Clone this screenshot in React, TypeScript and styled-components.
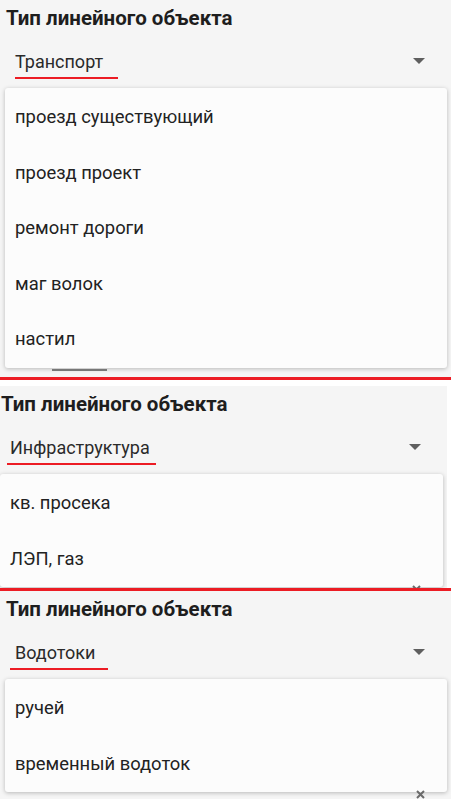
import React from "react";
import styled, { createGlobalStyle } from "styled-components";

const GlobalStyle = createGlobalStyle`
	html, body {
		margin: 0;
		padding: 0;
		background: #ffffff;
	}
	body {
		font-family: Roboto, "Noto Sans", "Liberation Sans", sans-serif;
		color: #212121;
	}
`;

interface PanelData {
	value: string;
	items: string[];
	height: number;
	width: number;
	left: number;
	lineOffset: number;
	lineWidth: number;
	peek: "bar" | "cross";
}

const panels: PanelData[] = [
	{
		value: "Транспорт",
		items: ["проезд существующий", "проезд проект", "ремонт дороги", "маг волок", "настил"],
		height: 377,
		width: 451,
		left: 0,
		lineOffset: 0,
		lineWidth: 103,
		peek: "bar",
	},
	{
		value: "Инфраструктура",
		items: ["кв. просека", "ЛЭП, газ"],
		height: 202,
		width: 447,
		left: -5,
		lineOffset: -3,
		lineWidth: 149,
		peek: "cross",
	},
	{
		value: "Водотоки",
		items: ["ручей", "временный водоток"],
		height: 208,
		width: 451,
		left: 0,
		lineOffset: -5,
		lineWidth: 98,
		peek: "cross",
	},
];

const Caret = () => (
	<svg width="12" height="6" viewBox="0 0 12 6">
		<path d="M0 0 L12 0 L6 6 Z" fill="#5f5f5f" />
	</svg>
);

const ClearIcon = () => (
	<svg width="9" height="9" viewBox="0 0 9 9">
		<path d="M1 1 L8 8 M8 1 L1 8" stroke="#6a6a6a" strokeWidth="2" />
	</svg>
);

const App: React.FC = () => {
	return (
		<>
			<GlobalStyle />
			<Screen>
				{panels.map((p, i) => (
					<React.Fragment key={i}>
						{i === 1 && <Gap />}
						<Panel h={p.height} w={p.width}>
							<Inner shift={p.left}>
								<Title>Тип линейного объекта</Title>
								<Field>
									<ValueBox>
										<Value>{p.value}</Value>
										<Underline offset={p.lineOffset} w={p.lineWidth} />
									</ValueBox>
									<CaretBox>
										<Caret />
									</CaretBox>
								</Field>
								<Menu>
									{p.items.map((item) => (
										<Item key={item}>{item}</Item>
									))}
								</Menu>
								<Peek>
									{p.peek === "bar" ? (
										<Bar />
									) : (
										<Cross>
											<ClearIcon />
										</Cross>
									)}
								</Peek>
							</Inner>
						</Panel>
						{i < 2 && <Divider />}
					</React.Fragment>
				))}
			</Screen>
		</>
	);
};

export default App;

const Screen = styled.div`
	width: 451px;
	height: 799px;
	overflow: hidden;
	display: flex;
	flex-direction: column;
	background: #ffffff;
`;

const Gap = styled.div`
	height: 6px;
	flex-shrink: 0;
`;

const Divider = styled.div`
	height: 3px;
	flex-shrink: 0;
	background: #ec1c24;
`;

const Panel = styled.div<{ h: number; w: number }>`
	height: ${(props) => props.h}px;
	width: ${(props) => props.w}px;
	flex-shrink: 0;
	overflow: hidden;
	background: #f5f5f5;
`;

const Inner = styled.div<{ shift: number }>`
	margin-left: ${(props) => props.shift}px;
	padding: 4px 4px 0 6px;
	display: flex;
	flex-direction: column;
`;

const Title = styled.div`
	font-size: 20.5px;
	font-weight: 700;
	line-height: 28px;
	color: #1e1e1e;
`;

const Field = styled.div`
	display: flex;
	align-items: flex-start;
	justify-content: space-between;
	padding: 18px 22px 0 9px;
`;

const ValueBox = styled.div`
	display: flex;
	flex-direction: column;
`;

const CaretBox = styled.div`
	display: flex;
	padding-top: 8px;
`;

const Value = styled.div`
	font-size: 18px;
	line-height: 24px;
	color: #2a2a2a;
`;

const Underline = styled.div<{ offset: number; w: number }>`
	margin: 3px 0 0 ${(props) => props.offset}px;
	width: ${(props) => props.w}px;
	height: 2px;
	background: #ec1c24;
`;

const Menu = styled.div`
	margin: 9px 0 0 -1px;
	background: #fcfcfc;
	border-radius: 3px;
	box-shadow: 0 1px 4px rgba(0, 0, 0, 0.25);
	display: flex;
	flex-direction: column;
	padding: 1px 0;
`;

const Item = styled.div`
	height: 55.5px;
	display: flex;
	align-items: center;
	padding-left: 10px;
	font-size: 18.4px;
	color: #222222;
`;

const Peek = styled.div`
	display: flex;
	justify-content: space-between;
	height: 12px;
`;

const Bar = styled.div`
	margin: 1px 0 0 46px;
	width: 55px;
	height: 2px;
	background: #777777;
`;

const Cross = styled.div`
	margin: -2px 0 0 auto;
	padding-right: 22px;
	display: flex;
`;
